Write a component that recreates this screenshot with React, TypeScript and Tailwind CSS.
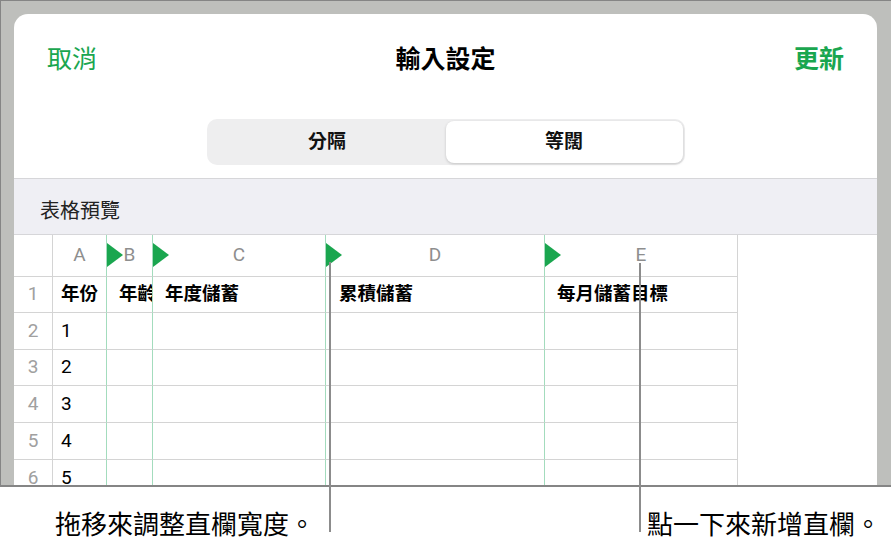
const font = "font-[Roboto,'Noto_Sans_CJK_TC',sans-serif]";

const cols = [
  { key: "A", title: "年份", w: "w-[54px]", pad: "pl-2" },
  { key: "B", title: "年齡", w: "w-[46px]", pad: "pl-3" },
  { key: "C", title: "年度儲蓄", w: "w-[173px]", pad: "pl-3" },
  { key: "D", title: "累積儲蓄", w: "w-[219px]", pad: "pl-[13px]" },
  { key: "E", title: "每月儲蓄目標", w: "w-[193px]", pad: "pl-3" },
];

// right border of each column: green where a resize marker sits, gray otherwise
const rightBorder = ["border-[#a3dcbd]", "border-[#a3dcbd]", "border-[#a3dcbd]", "border-[#a3dcbd]", "border-[#d4d4d4]"];

const rowHeights = ["h-[36px]", "h-[37px]", "h-[36px]", "h-[37px]", "h-[37px]", "h-[37px]"];

function Marker() {
  return (
    <svg className="absolute left-0 top-[8px]" width="16" height="24" viewBox="0 0 16 24">
      <polygon points="0,0 16,12 0,24" fill="#1aa64f" />
    </svg>
  );
}

export default function App() {
  const values = ["", "1", "2", "3", "4", "5"];

  return (
    <div className={`relative w-[891px] h-[551px] bg-white overflow-hidden ${font}`}>
      {/* gray frame with the sheet */}
      <div className="h-[487px] bg-[#bebfbc] border-t border-l border-b-2 border-[#858585] pt-[13px] pl-[13px] pr-[14px]">
        <div className="h-full bg-white rounded-t-[14px] overflow-hidden flex flex-col">
          {/* nav bar */}
          <div className="h-[92px] shrink-0 flex items-center justify-between px-[33px]">
            <span className="text-[25px] text-[#1aa64f]">取消</span>
            <span className="text-[25px] font-bold text-black">輸入設定</span>
            <span className="text-[25px] font-bold text-[#1aa64f]">更新</span>
          </div>

          {/* segmented control */}
          <div className="mt-[13px] mx-auto w-[478px] h-[46px] shrink-0 rounded-[10px] bg-[#eeeeef] p-[2px] flex">
            <div className="flex-1 flex items-center justify-center text-[19px] font-semibold text-[#111]">分隔</div>
            <div className="flex-1 flex items-center justify-center rounded-[8px] bg-white shadow-[0_1px_3px_rgba(0,0,0,0.18)] text-[19px] font-semibold text-[#111]">
              等闊
            </div>
          </div>

          {/* section header */}
          <div className="mt-[13px] h-[57px] shrink-0 bg-[#efeff4] border-t border-b border-[#d6d6d9] flex items-end pb-[8px] pl-[26px]">
            <span className="text-[20px] text-[#222]">表格預覽</span>
          </div>

          {/* table preview */}
          <div className="flex flex-col">
            <div className="flex h-[42px]">
              <div className="w-[39px] border-r border-b border-[#d4d4d4]" />
              {cols.map((c, i) => (
                <div
                  key={c.key}
                  className={`relative ${c.w} shrink-0 border-r border-b border-b-[#d4d4d4] ${rightBorder[i]} flex items-center justify-center text-[19px] text-[#8e8e8e]`}
                >
                  {i > 0 && <Marker />}
                  {c.key}
                </div>
              ))}
            </div>
            {values.map((v, ri) => (
              <div key={ri} className={`flex ${rowHeights[ri]} shrink-0`}>
                <div className="w-[39px] shrink-0 border-r border-b border-[#d4d4d4] flex items-center justify-center text-[19px] text-[#a0a0a0]">
                  {ri + 1}
                </div>
                {cols.map((c, i) => (
                  <div
                    key={c.key}
                    className={`${c.w} shrink-0 border-r border-b border-b-[#d4d4d4] ${rightBorder[i]} ${c.pad} flex items-center overflow-hidden whitespace-nowrap text-black ${ri === 0 ? "text-[18.5px] font-bold" : "text-[19px]"}`}
                  >
                    {ri === 0 ? c.title : i === 0 ? v : ""}
                  </div>
                ))}
              </div>
            ))}
          </div>
        </div>
      </div>

      {/* callouts */}
      <div className="flex pt-[22px] text-[26px] leading-[32px] text-black whitespace-nowrap">
        <span className="ml-[55px]">拖移來調整直欄寬度。</span>
        <span className="ml-[332px]">點一下來新增直欄。</span>
      </div>
      <div className="absolute left-[329px] top-[262px] w-[2px] h-[270px] bg-[#8c8c8c]" />
      <div className="absolute left-[639px] top-[263px] w-[2px] h-[269px] bg-[#8c8c8c]" />
    </div>
  );
}
